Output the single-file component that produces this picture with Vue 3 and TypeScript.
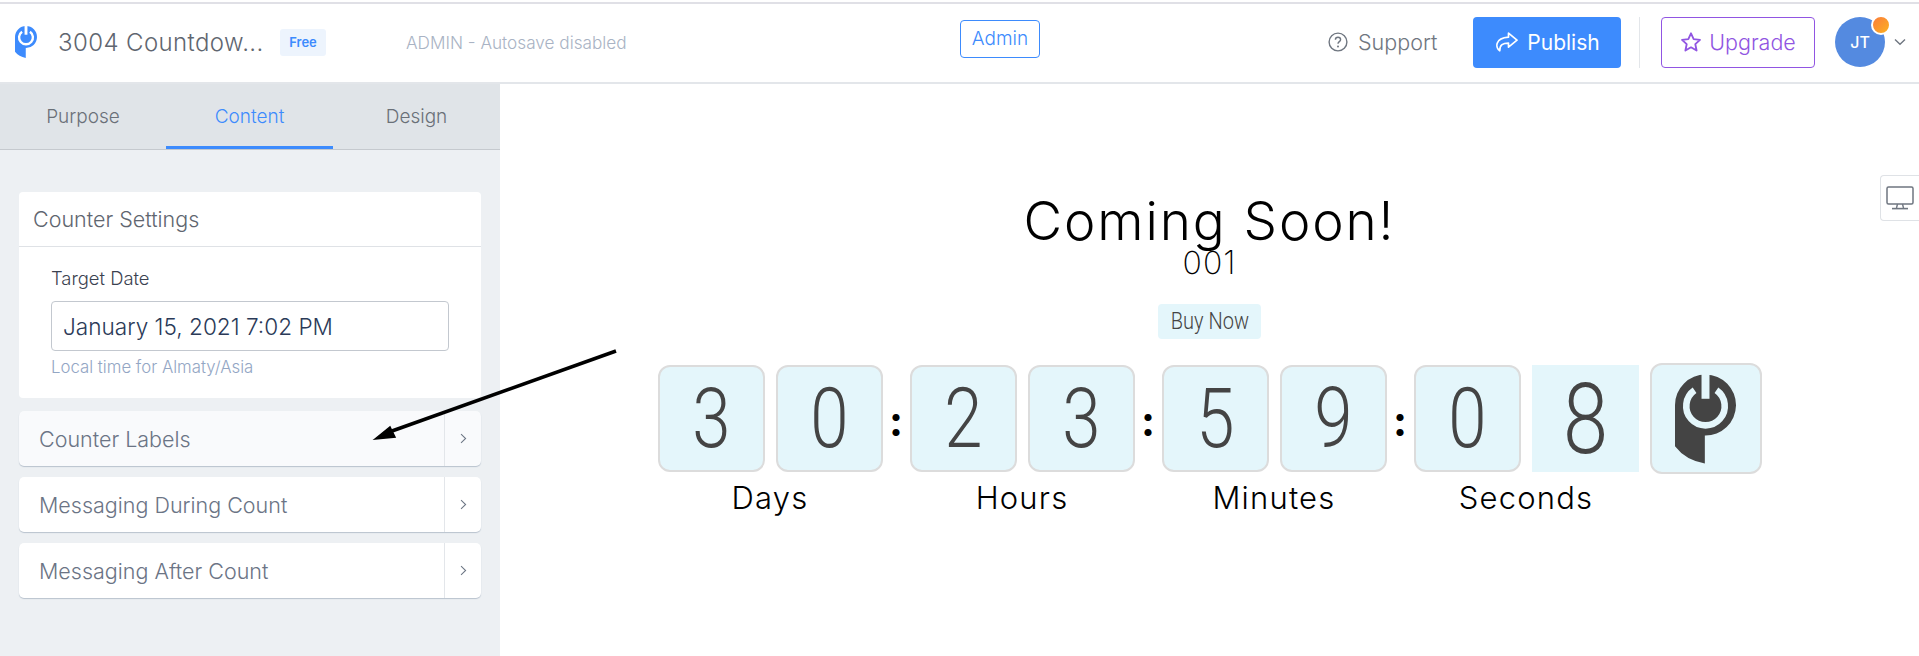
<script setup lang="ts">
interface Group { label: string; digits: string[] }
const tabs: string[] = ['Purpose', 'Content', 'Design']
const rows: string[] = ['Counter Labels', 'Messaging During Count', 'Messaging After Count']
const groups: Group[] = [
  { label: 'Days', digits: ['3', '0'] },
  { label: 'Hours', digits: ['2', '3'] },
  { label: 'Minutes', digits: ['5', '9'] },
  { label: 'Seconds', digits: ['0', '8'] },
]
</script>

<template>
  <div class="page">
    <header class="topbar">
      <svg class="brand" viewBox="103 52 184 268">
        <path fill="#3d8bfd" d="M103 144A92 92 0 1 1 193 236V320Q135 310 103 268Z" />
        <path fill="none" stroke="#fff" stroke-width="20" d="M228 99.5A58 58 0 1 1 162 99.5" />
        <rect x="183" y="50" width="24" height="75" fill="#fff" />
      </svg>
      <span class="doc-title">3004 Countdow...</span>
      <span class="plan">Free</span>
      <span class="status">ADMIN - Autosave disabled</span>
      <button class="admin">Admin</button>
      <span class="support">
        <svg viewBox="0 0 20 20" width="20" height="20">
          <circle cx="10" cy="10" r="8.9" fill="none" stroke="#6f7680" stroke-width="1.4" />
          <path d="M7.4 7.8C7.4 6.2 8.6 5.3 10 5.3S12.6 6.2 12.6 7.7C12.6 9.6 10 9.6 10 11.7" fill="none" stroke="#6f7680" stroke-width="1.4" />
          <circle cx="10" cy="14.4" r="1" fill="#6f7680" />
        </svg>
        Support
      </span>
      <button class="publish">
        <svg viewBox="0 0 24 20" width="24" height="20">
          <path d="M14.5 1.2L23 8.2L14.5 15.2V11.2C9 11.2 5.6 12.6 5.8 18.8C1.4 16.2 0.4 6 14.5 5.2Z" fill="none" stroke="#fff" stroke-width="1.7" stroke-linejoin="round" />
        </svg>
        Publish
      </button>
      <span class="vline"></span>
      <button class="upgrade">
        <svg viewBox="0 0 24 24" width="22" height="22">
          <path d="M12 2.5L14.9 8.9L21.8 9.7L16.7 14.4L18.1 21.3L12 17.8L5.9 21.3L7.3 14.4L2.2 9.7L9.1 8.9Z" fill="none" stroke="#9155e2" stroke-width="2" stroke-linejoin="round" />
        </svg>
        Upgrade
      </button>
      <span class="avatar">JT<i class="dot"></i></span>
      <svg class="caret" viewBox="0 0 12 8" width="12" height="8">
        <path d="M1 1.5L6 6.2L11 1.5" fill="none" stroke="#6f7680" stroke-width="1.4" />
      </svg>
    </header>

    <div class="body">
      <aside class="side">
        <nav class="tabs">
          <span v-for="t in tabs" :key="t" class="tab" :class="{ on: t === 'Content' }">{{ t }}</span>
        </nav>
        <section class="card">
          <h2 class="card-head">Counter Settings</h2>
          <div class="card-body">
            <label class="field">Target Date</label>
            <div class="input">January 15, 2021 7:02 PM</div>
            <p class="hint">Local time for Almaty/Asia</p>
          </div>
        </section>
        <div class="rows">
          <div v-for="(r, i) in rows" :key="r" class="row" :class="{ hover: i === 0 }">
            <span class="row-text">{{ r }}</span>
            <span class="row-go">
              <svg viewBox="0 0 8 12" width="7" height="11">
                <path d="M1.2 1L6.4 6L1.2 11" fill="none" stroke="#6c7684" stroke-width="1.2" />
              </svg>
            </span>
          </div>
        </div>
      </aside>

      <main class="stage">
        <h1 class="headline">Coming Soon!</h1>
        <p class="sub">001</p>
        <span class="buy"><span class="narrow">Buy Now</span></span>
        <div class="counter">
          <template v-for="(g, i) in groups" :key="g.label">
            <div class="group">
              <div class="digits">
                <span
                  v-for="(d, j) in g.digits"
                  :key="j"
                  class="digit"
                  :class="{ flipping: i === 3 && j === 1 }"
                ><b class="glyph">{{ d }}</b></span>
              </div>
              <span class="unit">{{ g.label }}</span>
            </div>
            <span v-if="i < 3" class="colon">:</span>
          </template>
          <span class="logo-box">
            <svg viewBox="103 52 184 268" width="61" height="90">
              <path fill="#444" d="M103 144A92 92 0 1 1 193 236V320Q135 310 103 268Z" />
              <path fill="none" stroke="#e4f6fb" stroke-width="20" d="M228 99.5A58 58 0 1 1 162 99.5" />
              <rect x="183" y="50" width="24" height="75" fill="#e4f6fb" />
            </svg>
          </span>
        </div>
      </main>
    </div>

    <div class="device">
      <svg viewBox="0 0 28 24" width="28" height="24">
        <rect x="1" y="1" width="26" height="17" rx="1.5" fill="none" stroke="#6f7680" stroke-width="1.5" />
        <path d="M11.5 18L10.5 22M16.5 18L17.5 22" stroke="#6f7680" stroke-width="1.4" />
        <path d="M6 22.6H22" stroke="#6f7680" stroke-width="1.6" />
      </svg>
    </div>

    <svg class="arrow" viewBox="0 0 1919 656" width="1919" height="656">
      <path d="M616 351L392 431" stroke="#000" stroke-width="3.6" fill="none" />
      <path d="M375 439L390 427L395 437Z" fill="#000" stroke="#000" stroke-width="1.5" />
    </svg>
  </div>
</template>

<style>
html, body { margin: 0; background: #fff; }
</style>

<style scoped>
.page {
  position: relative;
  width: 1919px;
  height: 656px;
  overflow: hidden;
  font-family: Inter, "Noto Sans", sans-serif;
  font-weight: 300;
}
.topbar {
  box-sizing: border-box;
  height: 84px;
  padding-top: 2px;
  display: flex;
  align-items: center;
  background: #fff;
  background-image: linear-gradient(#fff 2px, #e0e0e6 2px, #e0e0e6 4px, transparent 4px);
  border-bottom: 2px solid #e3e6ea;
}
.brand { flex: none; width: 22px; height: 32px; margin-left: 15px; }
.doc-title { flex: none; width: 222px; margin-left: 21px; font-size: 24px; letter-spacing: 0.4px; color: #5f6670; white-space: nowrap; }
.plan {
  flex: none;
  width: 46px;
  height: 27px;
  display: flex;
  align-items: center;
  justify-content: center;
  background: #edf4fd;
  border-radius: 3px;
  color: #3d8bfd;
  font-size: 13px;
  font-weight: 600;
}
.status { flex: none; width: 554px; margin-left: 80px; font-size: 17.2px; color: #a9b3c4; white-space: nowrap; }
button { font: inherit; padding: 0; cursor: pointer; }
.admin {
  flex: none;
  width: 80px;
  height: 38px;
  margin-top: -7px;
  background: #fff;
  border: 1px solid #3d8bfd;
  border-radius: 4px;
  color: #3d8bfd;
  font-size: 19px;
}
.support {
  flex: none;
  width: 110px;
  margin-left: 288px;
  display: flex;
  align-items: center;
  gap: 10px;
  font-size: 21.5px;
  color: #6f7680;
}
.publish {
  flex: none;
  margin-left: 35px;
  width: 148px;
  height: 51px;
  display: flex;
  align-items: center;
  justify-content: center;
  gap: 9px;
  background: #3d8bfd;
  border: 0;
  border-radius: 4px;
  color: #fff;
  font-size: 21px;
  font-weight: 400;
}
.vline { flex: none; margin-left: 18px; width: 1px; height: 51px; background: #e3e6ea; }
.upgrade {
  flex: none;
  margin-left: 21px;
  width: 154px;
  height: 51px;
  display: flex;
  align-items: center;
  justify-content: center;
  gap: 7px;
  background: #fff;
  border: 1px solid #9155e2;
  border-radius: 4px;
  color: #9155e2;
  font-size: 21.5px;
}
.avatar {
  flex: none;
  position: relative;
  margin-left: 20px;
  width: 50px;
  height: 50px;
  border-radius: 50%;
  display: flex;
  align-items: center;
  justify-content: center;
  background: #548ae0;
  color: #fff;
  font-size: 16px;
  font-weight: 500;
}
.dot {
  position: absolute;
  top: -2px;
  right: -6px;
  width: 16px;
  height: 16px;
  border-radius: 50%;
  border: 2px solid #fff;
  background: linear-gradient(135deg, #fb7c3c, #fcb11f);
}
.caret { flex: none; margin-left: 9px; }

.body { display: flex; height: 572px; }
.side { width: 500px; flex: none; background: #edf0f3; }
.tabs {
  height: 66px;
  box-sizing: border-box;
  display: grid;
  grid-template-columns: 166px 167px 167px;
  background: #e0e4e8;
  border-bottom: 1px solid #c5c9ce;
}
.tab {
  display: flex;
  align-items: center;
  justify-content: center;
  font-size: 19px;
  color: #6a7078;
  height: 65px;
  box-sizing: border-box;
}
.tab.on { color: #3d8bfd; border-bottom: 3px solid #3d8bfd; padding-top: 3px; }
.card {
  margin: 42px 19px 0;
  height: 206px;
  background: #fff;
  border-radius: 4px;
}
.card-head {
  margin: 0;
  height: 55px;
  box-sizing: border-box;
  padding-left: 14px;
  display: flex;
  align-items: center;
  border-bottom: 1px solid #dfe2e6;
  font-size: 21.5px;
  font-weight: 300;
  color: #5f6670;
}
.card-body { padding: 19px 32px 0; }
.field { display: block; font-size: 18.4px; line-height: 24px; color: #3b4250; font-weight: 300; }
.input {
  box-sizing: border-box;
  height: 50px;
  margin-top: 11px;
  padding-left: 11px;
  display: flex;
  align-items: center;
  border: 1px solid #c3c8cf;
  border-radius: 4px;
  font-size: 22.6px;
  font-weight: 300;
  color: #2b3a58;
  white-space: nowrap;
}
.hint { margin: 7px 0 0; font-size: 16.8px; line-height: 18px; color: #93a6c4; white-space: nowrap; }
.rows { margin: 13px 19px 0; display: flex; flex-direction: column; gap: 11px; }
.row {
  height: 55px;
  display: flex;
  align-items: stretch;
  background: #fff;
  border-radius: 5px;
  box-shadow: 0 1px 1px #b9c2ce;
}
.row.hover { background: #f9fafc; }
.row-text {
  flex: 1;
  padding-left: 20px;
  display: flex;
  align-items: center;
  font-size: 21.5px;
  color: #6b7485;
}
.row-go {
  width: 36px;
  display: flex;
  align-items: center;
  justify-content: center;
  border-left: 1px solid #e3e6ea;
}

.stage {
  flex: 1;
  display: flex;
  flex-direction: column;
  align-items: center;
  color: #000;
}
.headline {
  margin: 107px 0 0;
  font-size: 53px;
  line-height: 60px;
  letter-spacing: 1.9px;
  font-weight: 300;
  white-space: nowrap;
}
.sub { margin: -6px 0 0; font-size: 32px; line-height: 36px; letter-spacing: 1px; font-weight: 200; }
.buy {
  margin-top: 23px;
  width: 103px;
  height: 35px;
  display: flex;
  align-items: center;
  justify-content: center;
  background: #e4f6fb;
  border-radius: 4px;
  color: #444;
  font-family: Roboto, sans-serif;
  font-weight: 300;
  font-size: 23px;
}
.narrow { display: inline-block; transform: scaleX(0.87); white-space: nowrap; }
.counter { margin-top: 26px; display: flex; align-items: flex-start; }
.group { width: 225px; display: flex; flex-direction: column; align-items: center; }
.digits { display: flex; gap: 11px; }
.digit {
  box-sizing: border-box;
  width: 107px;
  height: 107px;
  display: flex;
  align-items: center;
  justify-content: center;
  background: #e4f6fb;
  border: 2px solid #dcdcdc;
  border-radius: 12px;
  color: #444;
  font-family: Roboto, sans-serif;
  font-size: 84px;
}
.glyph { display: inline-block; font-weight: 350; transform: scaleX(0.82); }
.digit.flipping { border: 0; border-radius: 0; font-size: 99px; }
.unit { margin-top: 7px; font-size: 31px; line-height: 38px; letter-spacing: 1.2px; white-space: nowrap; }
.colon {
  width: 27px;
  height: 107px;
  display: flex;
  align-items: center;
  justify-content: center;
  font-family: Lato, sans-serif;
  font-weight: 900;
  font-size: 44px;
}
.logo-box {
  box-sizing: border-box;
  margin: -2px 0 0 11px;
  width: 112px;
  height: 111px;
  display: flex;
  align-items: center;
  justify-content: center;
  background: #e4f6fb;
  border: 2px solid #dcdcdc;
  border-radius: 12px;
}
.device {
  position: absolute;
  top: 175px;
  right: 0;
  width: 39px;
  height: 46px;
  box-sizing: border-box;
  display: flex;
  align-items: center;
  justify-content: center;
  background: #fff;
  border: 1px solid #dfe2e6;
  border-right: 0;
  border-radius: 4px 0 0 4px;
}
.arrow { position: absolute; top: 0; left: 0; pointer-events: none; }
</style>
